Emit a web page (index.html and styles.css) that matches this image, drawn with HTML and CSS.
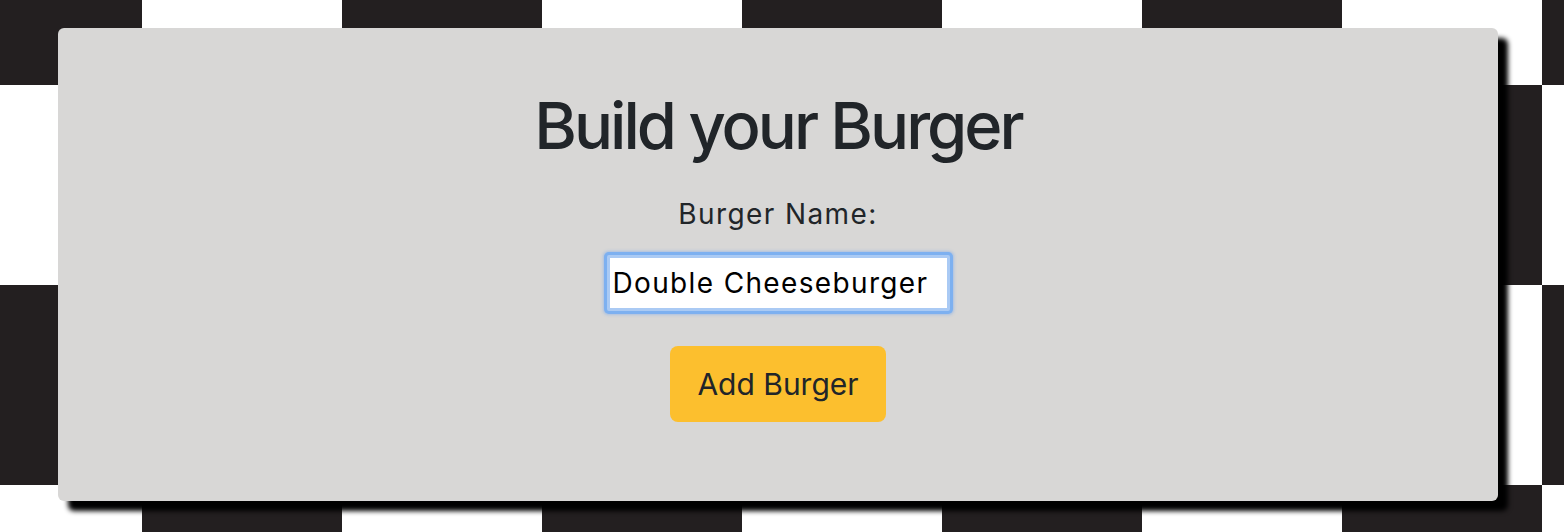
FILE: index.html
```html
<!DOCTYPE html>
<html lang="en">
<head>
<meta charset="utf-8">
<title>Build your Burger</title>
<link rel="stylesheet" href="styles.css">
</head>
<body>
  <main class="card">
    <h1 class="title">Build your Burger</h1>
    <form class="burger-form">
      <label class="label" for="burger">Burger Name:</label>
      <input class="name-input" id="burger" type="text" value="Double Cheeseburger">
      <button class="add-btn" type="button">Add Burger</button>
    </form>
  </main>
</body>
</html>
```
FILE: styles.css
```css
* { box-sizing: border-box; }
html, body { margin: 0; padding: 0; }
body {
  min-height: 532px;
  overflow: hidden;
  background-color: #ffffff;
  background-image: conic-gradient(#231f20 25%, #ffffff 0 50%, #231f20 0 75%, #ffffff 0);
  background-size: 400px 400px;
  background-position: -258px -115px;
  font-family: Inter, "Noto Sans", sans-serif;
  color: #212529;
  padding: 28px 0 0 58px;
}
.card {
  width: 1440px;
  background: #d8d7d6;
  border-radius: 6px;
  box-shadow: 10px 10px 5px #000;
  padding: 59px 0 79px;
  display: flex;
  flex-direction: column;
  align-items: center;
}
.title {
  margin: 0;
  font-size: 65px;
  line-height: 78px;
  font-weight: 500;
  letter-spacing: -3px;
  color: #212529;
}
.burger-form {
  display: flex;
  flex-direction: column;
  align-items: center;
  margin-top: 32px;
}
.label {
  font-size: 28px;
  line-height: 34px;
  letter-spacing: 1.4px;
  color: #212529;
}
.name-input {
  margin-top: 24px;
  width: 343px;
  height: 56px;
  border: 3px solid #aacaf4;
  background: #fff;
  box-shadow: 0 0 0 3px #7db0f0, 0 0 3px 4px rgba(110, 165, 240, 0.45);
  border-radius: 2px;
  outline: none;
  padding: 0 0 0 3px;
  font-family: Inter, "Noto Sans", sans-serif;
  font-size: 28px;
  letter-spacing: 1.35px;
  color: #000;
}
.add-btn {
  margin-top: 35px;
  width: 216px;
  height: 76px;
  border: none;
  border-radius: 8px;
  background: #fcbf2e;
  color: #212529;
  font-family: Inter, "Noto Sans", sans-serif;
  font-size: 30px;
  padding: 0;
}
```
